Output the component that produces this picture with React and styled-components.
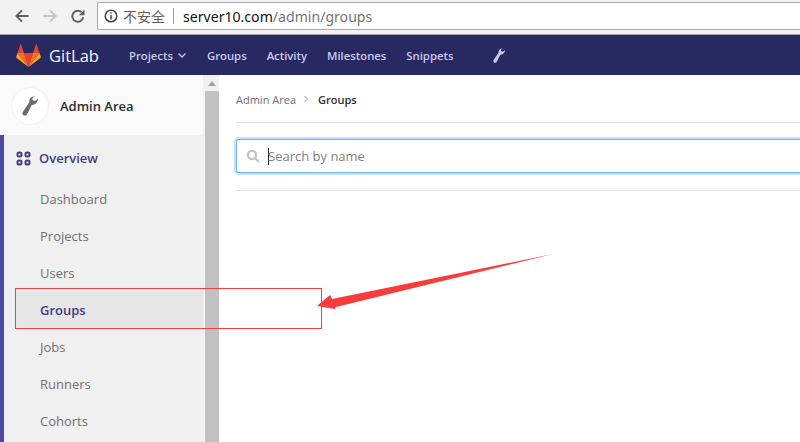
import React from 'react';
import styled, { createGlobalStyle } from 'styled-components';

const Global = createGlobalStyle`
  html, body { margin: 0; padding: 0; background: #fff; overflow: hidden; }
  * { box-sizing: border-box; }
`;
const Page = styled.div`
  position: relative; width: 800px; height: 442px; overflow: hidden;
  display: flex; flex-direction: column;
  font-family: "Open Sans", "Noto Sans", sans-serif;
`;
const Chrome = styled.div`
  height: 35px; flex: none; background: #f2f2f2; border-bottom: 1px solid #a8a8a8;
  display: flex; align-items: flex-start; padding: 2px 0 0 0;
`;
const ChromeBtns = styled.div`
  width: 97px; flex: none; height: 28px; display: flex; align-items: center; gap: 14px; padding-left: 15px;
`;
const Address = styled.div`
  flex: 1; height: 28px; background: #fff; border: 1px solid #a9a9a9; border-right: 0; border-radius: 2px 0 0 2px;
  display: flex; align-items: center; padding-left: 6px;
  font-family: "Noto Sans", "Noto Sans CJK SC", sans-serif; font-size: 14.1px; color: #757575;
`;
const Insecure = styled.span`
  margin-left: 5px; font-size: 14px; color: #5f5f5f; font-family: "Noto Sans CJK SC", sans-serif;
`;
const Sep = styled.span`
  width: 1px; height: 16px; background: #9a9a9a; margin: 0 9px 0 8px;
`;
const Host = styled.span` color: #111; `;
const Nav = styled.div`
  height: 40px; flex: none; background: #292961; display: flex; align-items: center; padding-left: 16px;
`;
const Brand = styled.div`
  display: flex; align-items: center; gap: 8px; color: #f3f3fa; font-size: 16.5px; width: 113px; flex: none;
`;
const NavLinks = styled.div`
  display: flex; align-items: center; gap: 20px; font-size: 11.3px; font-weight: 600; color: #c8c8ee;
`;
const NavItem = styled.span` display: inline-flex; align-items: center; gap: 4px; `;
const NavWrench = styled.span` margin-left: 20px; display: inline-flex; `;
const Body = styled.div` flex: 1; display: flex; min-height: 0; `;
const Side = styled.aside` width: 203px; flex: none; background: #f0f0f0; display: flex; flex-direction: column; `;
const Context = styled.div`
  height: 60px; flex: none; background: #fafafa; display: flex; align-items: center; gap: 11px; padding: 1px 0 0 11px;
  font-size: 13px; font-weight: 600; color: #2e2e2e;
`;
const Avatar = styled.div`
  width: 38px; height: 38px; border-radius: 50%; background: #fff; border: 1px solid #f1f1f1;
  display: flex; align-items: center; justify-content: center;
`;
const Menu = styled.div` flex: 1; border-left: 4px solid #4b4ba3; `;
const Heading = styled.div`
  height: 45px; display: flex; align-items: center; gap: 8px; padding: 1px 0 0 12px;
  font-size: 13px; font-weight: 600; color: #3e3e7e;
`;
const Item = styled.div`
  height: 37px; display: flex; align-items: center; margin-left: 11px; padding-left: 25px; font-size: 13px;
  color: ${p => (p.$active ? '#3e3e7e' : '#707070')};
  font-weight: ${p => (p.$active ? 600 : 400)};
  background: ${p => (p.$active ? '#e6e6e6' : 'transparent')};
`;
const Scroll = styled.div`
  width: 16px; flex: none; background: #f1f1f1; padding-left: 2px; display: flex; flex-direction: column;
`;
const ScrollUp = styled.div`
  height: 16px; flex: none; display: flex; justify-content: center; align-items: center;
`;
const ScrollThumb = styled.div` flex: 1; background: #c1c1c1; `;
const Main = styled.main` flex: 1; padding-left: 17px; min-width: 0; `;
const Crumbs = styled.div`
  height: 48px; display: flex; align-items: center; gap: 7px; font-size: 11px; color: #707070;
  padding-top: 1px; border-bottom: 1px solid #e5e5e5;
`;
const CrumbNow = styled.span` color: #2e2e2e; font-weight: 600; margin-left: 2px; `;
const SearchBar = styled.div`
  height: 68px; display: flex; align-items: center; border-bottom: 1px solid #e5e5e5; padding-bottom: 1px;
`;
const SearchBox = styled.div`
  flex: 1; height: 34px; background: #fff; border: 1px solid #73b5f0; border-right: 0; border-radius: 3px 0 0 3px;
  box-shadow: 0 0 0 2px #c4e0fa; display: flex; align-items: center; padding-left: 9px; gap: 8px;
  font-size: 13px; color: #7f7f7f;
`;
const Caret = styled.span` width: 1px; height: 17px; background: #222; `;
const Placeholder = styled.span` margin-left: -9px; `;
const Highlight = styled.div`
  position: absolute; left: 15px; top: 288px; width: 307px; height: 41px; border: 1px solid #f04040;
`;
const Arrow = styled.svg` position: absolute; left: 310px; top: 250px; `;

const Wrench = ({ w, h, color }) => (
  <svg width={w} height={h} viewBox="0 0 16 20" fill={color}>
    <path d="M11.500.5C8.500 1 7 3.500 7.500 6L.8 16C0 17.500.5 19 2 19.500c1.500.5 2.500-.2 3.200-1.500L9.800 9c2.700 0 5.200-1.500 6-5L16 2.500 13 5l-2.500-1V2L13 .5z" />
  </svg>
);

export default function App() {
  return (
    <Page>
      <Global />
      <Chrome>
        <ChromeBtns>
          <svg width="14" height="14" viewBox="0 0 16 16" fill="none" stroke="#5f5f5f" strokeWidth="2.200"><path d="M15.500 8H2M8 1.500 1.500 8 8 14.500" /></svg>
          <svg width="14" height="14" viewBox="0 0 16 16" fill="none" stroke="#c4c4c4" strokeWidth="2.200"><path d="M.5 8H14M8 1.500 14.500 8 8 14.500" /></svg>
          <svg width="14" height="14" viewBox="0 0 16 16" fill="none" stroke="#5f5f5f" strokeWidth="2.200"><path d="M14 9.500A6.300 6.300 0 1 1 12 3.500" /><path d="M15.500.5v6.500H9z" fill="#5f5f5f" stroke="none" /></svg>
        </ChromeBtns>
        <Address>
          <svg width="14" height="14" viewBox="0 0 14 14" fill="none" stroke="#444" strokeWidth="1.500"><circle cx="7" cy="7" r="5.800" /><path d="M7 6v4.500M7 3.300v1.500" /></svg>
          <Insecure>不安全</Insecure>
          <Sep />
          <Host>server10.com</Host>/admin/groups
        </Address>
      </Chrome>
      <Nav>
        <Brand>
          <svg width="25" height="23" viewBox="0 0 25 23">
            <path d="M12.500 23 17 9H8z" fill="#e24329" />
            <path d="M12.500 23 8 9H1.500z" fill="#fc6d26" />
            <path d="M1.500 9 .2 13c-.1.400 0 .8.400 1.100L12.500 23z" fill="#fca326" />
            <path d="M1.500 9H8L5.200.6c-.1-.4-.7-.4-.9 0z" fill="#e24329" />
            <path d="M12.500 23 17 9h6.500z" fill="#fc6d26" />
            <path d="m23.500 9 1.300 4c.1.400 0 .8-.4 1.100L12.500 23z" fill="#fca326" />
            <path d="M23.500 9H17L19.800.6c.1-.4.700-.4.900 0z" fill="#e24329" />
          </svg>
          GitLab
        </Brand>
        <NavLinks>
          <NavItem>Projects
            <svg width="10" height="10" viewBox="0 0 10 10" fill="none" stroke="#c8c8ee" strokeWidth="1.300"><path d="m1.500 3.500 3.500 3.500 3.500-3.500" /></svg>
          </NavItem>
          <NavItem>Groups</NavItem>
          <NavItem>Activity</NavItem>
          <NavItem>Milestones</NavItem>
          <NavItem>Snippets</NavItem>
          <NavWrench><Wrench w={12} h={15} color="#c8c8ee" /></NavWrench>
        </NavLinks>
      </Nav>
      <Body>
        <Side>
          <Context>
            <Avatar><Wrench w={16} h={20} color="#6b6b6b" /></Avatar>
            Admin Area
          </Context>
          <Menu>
            <Heading>
              <svg width="15" height="15" viewBox="0 0 15 15" fill="none" stroke="#3e3e7e" strokeWidth="2">
                <rect x="1.500" y="1.500" width="4" height="4" rx="1.500" />
                <rect x="9.500" y="1.500" width="4" height="4" rx="1.500" />
                <rect x="1.500" y="9.500" width="4" height="4" rx="1.500" />
                <rect x="9.500" y="9.500" width="4" height="4" rx="1.500" />
              </svg>
              Overview
            </Heading>
            <Item>Dashboard</Item>
            <Item>Projects</Item>
            <Item>Users</Item>
            <Item $active>Groups</Item>
            <Item>Jobs</Item>
            <Item>Runners</Item>
            <Item>Cohorts</Item>
          </Menu>
        </Side>
        <Scroll>
          <ScrollUp>
            <svg width="8" height="5" viewBox="0 0 8 5"><path d="M4 0 8 5H0z" fill="#a3a3a3" /></svg>
          </ScrollUp>
          <ScrollThumb />
        </Scroll>
        <Main>
          <Crumbs>
            Admin Area
            <svg width="6" height="8" viewBox="0 0 6 8" fill="none" stroke="#999" strokeWidth="1"><path d="m1.500 1 3 3-3 3" /></svg>
            <CrumbNow>Groups</CrumbNow>
          </Crumbs>
          <SearchBar>
            <SearchBox>
              <svg width="14" height="14" viewBox="0 0 14 14" fill="none" stroke="#c4c4c4" strokeWidth="2.300"><circle cx="6" cy="6" r="4.200" /><path d="m9.200 9.200 3.800 3.800" /></svg>
              <Caret />
              <Placeholder>Search by name</Placeholder>
            </SearchBox>
          </SearchBar>
        </Main>
      </Body>
      <Highlight />
      <Arrow width="245" height="65" viewBox="0 0 245 65">
        <path d="M243 4 22 49 20 45 7 56 25 59 26 57z" fill="#f83c3c" />
      </Arrow>
    </Page>
  );
}
